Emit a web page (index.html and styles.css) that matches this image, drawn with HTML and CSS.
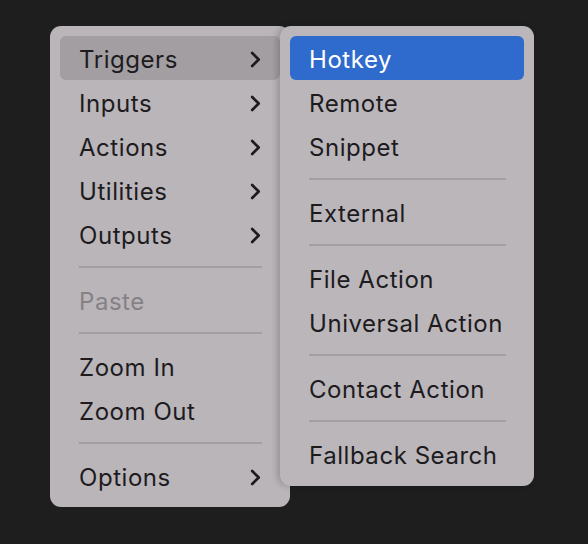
FILE: index.html
```html
<!DOCTYPE html>
<html>
<head>
<meta charset="utf-8">
<link rel="stylesheet" href="styles.css">
</head>
<body>
<div class="stage">
  <div class="menu main">
    <div class="item active"><span>Triggers</span><svg class="chev" viewBox="0 0 11 17"><path d="M2.2 2l6.5 6.5-6.5 6.5"/></svg></div>
    <div class="item"><span>Inputs</span><svg class="chev" viewBox="0 0 11 17"><path d="M2.2 2l6.5 6.5-6.5 6.5"/></svg></div>
    <div class="item"><span>Actions</span><svg class="chev" viewBox="0 0 11 17"><path d="M2.2 2l6.5 6.5-6.5 6.5"/></svg></div>
    <div class="item"><span>Utilities</span><svg class="chev" viewBox="0 0 11 17"><path d="M2.2 2l6.5 6.5-6.5 6.5"/></svg></div>
    <div class="item"><span>Outputs</span><svg class="chev" viewBox="0 0 11 17"><path d="M2.2 2l6.5 6.5-6.5 6.5"/></svg></div>
    <div class="sep"></div>
    <div class="item disabled"><span>Paste</span></div>
    <div class="sep"></div>
    <div class="item"><span>Zoom In</span></div>
    <div class="item"><span>Zoom Out</span></div>
    <div class="sep"></div>
    <div class="item"><span>Options</span><svg class="chev" viewBox="0 0 11 17"><path d="M2.2 2l6.5 6.5-6.5 6.5"/></svg></div>
  </div>
  <div class="menu sub">
    <div class="item selected"><span>Hotkey</span></div>
    <div class="item"><span>Remote</span></div>
    <div class="item"><span>Snippet</span></div>
    <div class="sep"></div>
    <div class="item"><span>External</span></div>
    <div class="sep"></div>
    <div class="item"><span>File Action</span></div>
    <div class="item"><span>Universal Action</span></div>
    <div class="sep"></div>
    <div class="item"><span>Contact Action</span></div>
    <div class="sep"></div>
    <div class="item"><span>Fallback Search</span></div>
  </div>
</div>
</body>
</html>
```
FILE: styles.css
```css
html, body {
  margin: 0;
  padding: 0;
  background: #1e1e1e;
  width: 588px;
  height: 544px;
  overflow: hidden;
}
.stage {
  position: relative;
  width: 588px;
  height: 544px;
}
.menu {
  position: absolute;
  top: 26px;
  box-sizing: border-box;
  background: #b9b5b9;
  border-radius: 11px;
  padding: 10px;
  font-family: "Inter", "Noto Sans", sans-serif;
  font-size: 24px;
  letter-spacing: 0.55px;
  color: #1d1b1e;
  display: flex;
  flex-direction: column;
}
.main {
  left: 50px;
  width: 240px;
  height: 481px;
}
.sub {
  left: 280px;
  width: 254px;
  height: 460px;
  box-shadow: -3px 0 6px rgba(0,0,0,0.18);
  background: #bab6ba;
}
.item {
  height: 44px;
  flex: none;
  display: flex;
  align-items: center;
  justify-content: space-between;
  padding: 0 19px;
  border-radius: 6px;
  white-space: nowrap;
}
.item span {
  position: relative;
  top: 1px;
}
.item.active {
  background: #a29ea2;
}
.item.selected {
  background: #2f6bcc;
  color: #ffffff;
}
.item.disabled {
  color: #858185;
}
.chev {
  width: 11px;
  height: 17px;
  margin-right: 0;
  margin-top: 2px;
  fill: none;
  stroke: #1d1b1e;
  stroke-width: 2.7;
  stroke-linecap: round;
  stroke-linejoin: round;
}
.sep {
  flex: none;
  height: 22px;
  margin: 0 18px 0 19px;
  display: flex;
  align-items: center;
}
.sep::before {
  content: "";
  flex: 1;
  height: 2px;
  background: #a29ea3;
}
```
